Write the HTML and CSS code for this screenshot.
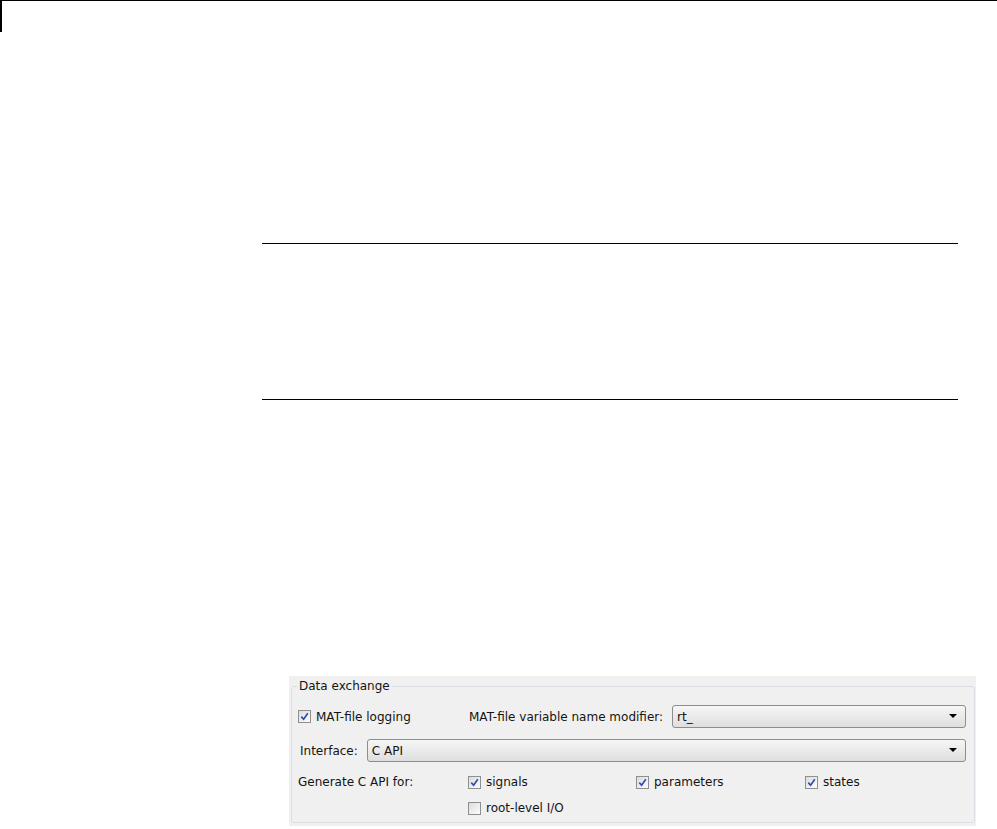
FILE: index.html
```html
<!DOCTYPE html>
<html>
<head>
  <title>Data exchange</title>
  <link rel="stylesheet" href="styles.css">
</head>
<body>
  <div class="page-top"></div>

  <div class="doc">
    <hr class="rule rule-first">
    <hr class="rule rule-second">

    <div class="figure">
      <fieldset class="group">
        <legend>Data exchange</legend>

        <div class="row">
          <label class="check check-wide">
            <span class="box checked"><svg viewBox="0 0 9 9"><path d="M1.3 4.6 L3.6 7.2 L7.8 1.2"/></svg></span>
            MAT-file logging
          </label>
          <span class="label">MAT-file variable name modifier:</span>
          <div class="select">rt_<span class="arrow"></span></div>
        </div>

        <div class="row">
          <span class="label label-first">Interface:</span>
          <div class="select">C API<span class="arrow"></span></div>
        </div>

        <div class="api-grid">
          <span class="label">Generate C API for:</span>
          <label class="check">
            <span class="box checked"><svg viewBox="0 0 9 9"><path d="M1.3 4.6 L3.6 7.2 L7.8 1.2"/></svg></span>
            signals
          </label>
          <label class="check">
            <span class="box checked"><svg viewBox="0 0 9 9"><path d="M1.3 4.6 L3.6 7.2 L7.8 1.2"/></svg></span>
            parameters
          </label>
          <label class="check">
            <span class="box checked"><svg viewBox="0 0 9 9"><path d="M1.3 4.6 L3.6 7.2 L7.8 1.2"/></svg></span>
            states
          </label>
          <span></span>
          <label class="check">
            <span class="box"></span>
            root-level I/O
          </label>
        </div>
      </fieldset>
    </div>
  </div>
</body>
</html>
```

FILE: styles.css
```css
body {
  margin: 0;
  background: #fff;
  font-family: "DejaVu Sans", sans-serif;
  font-size: 12px;
  color: #141414;
}

.page-top {
  height: 31px;
  border-top: 1px solid #000;
  border-left: 2px solid #000;
}

.doc {
  padding-left: 262px;
  width: 696px;
}

.rule {
  margin: 0;
  border: 0;
  height: 1px;
  background: #000;
}

.rule-first {
  margin-top: 211px;
}

.rule-second {
  margin-top: 155px;
}

.figure {
  margin-top: 276px;
  margin-left: 27px;
  width: 687px;
  height: 150px;
  padding-top: 2px;
  box-sizing: border-box;
  background: #f0f0f0;
}

.group {
  margin: 0 1px 0 2px;
  padding: 11px 8px 6px 6px;
  border: 1px solid #d9dfe4;
  border-radius: 3px;
  height: 145px;
  box-sizing: border-box;
}

.group legend {
  padding: 0 2px;
  margin-left: -1px;
  line-height: 16px;
}

.row {
  display: flex;
  align-items: center;
  height: 23px;
  margin-bottom: 11px;
}

.label {
  white-space: nowrap;
}

.label-first {
  margin-left: 2px;
}

.check {
  display: flex;
  align-items: center;
  gap: 5px;
  white-space: nowrap;
}

.check-wide {
  width: 171px;
  flex: none;
}

.box {
  width: 11px;
  height: 11px;
  border: 1px solid #8e8f8f;
  background: linear-gradient(135deg, #dcdcdc, #fcfcfc);
  display: inline-flex;
  align-items: center;
  justify-content: center;
  flex: none;
}

.box svg {
  width: 9px;
  height: 9px;
}

.box svg path {
  fill: none;
  stroke: #2c47b5;
  stroke-width: 1.6;
}

.select {
  flex: 1;
  margin-left: 9px;
  height: 21px;
  border: 1px solid #8d8d8d;
  border-radius: 3px;
  background: linear-gradient(#f6f6f6, #dedede);
  padding-left: 4px;
  display: flex;
  align-items: center;
  position: relative;
}

.arrow {
  position: absolute;
  right: 8px;
  top: 8px;
  border-left: 4px solid transparent;
  border-right: 4px solid transparent;
  border-top: 4px solid #000;
}

.api-grid {
  display: grid;
  grid-template-columns: 170px 168px 169px 1fr;
  grid-auto-rows: 20px;
  row-gap: 6px;
  align-items: center;
  margin-top: -1px;
}
```
